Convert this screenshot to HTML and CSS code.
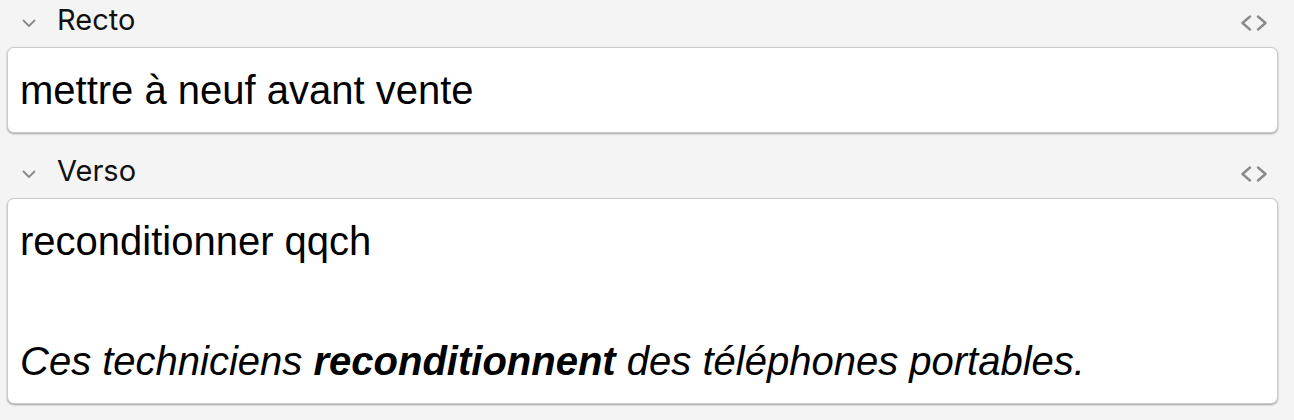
FILE: index.html
```html
<!DOCTYPE html>
<html lang="fr">
<head>
  <meta charset="UTF-8">
  <meta name="viewport" content="width=device-width, initial-scale=1.0">
  <title>Éditeur</title>
  <link rel="stylesheet" href="styles.css">
</head>
<body>
<div class="editor">

  <div class="field">
    <div class="field-head">
      <svg class="collapse" width="14" height="14" viewBox="0 0 14 14">
        <path d="M1.5 4.5 L7 10 L12.5 4.5" fill="none" stroke="#8a8a8a" stroke-width="1.8" stroke-linecap="round" stroke-linejoin="round"/>
      </svg>
      <span class="field-name">Recto</span>
      <svg class="html-toggle" width="28" height="16" viewBox="0 0 28 16">
        <path d="M10 1.5 L2.5 8 L10 14.5 M18 1.5 L25.5 8 L18 14.5" fill="none" stroke="#8a8a8a" stroke-width="2.4" stroke-linecap="round" stroke-linejoin="round"/>
      </svg>
    </div>
    <div class="field-box">
      <div>mettre à neuf avant vente</div>
    </div>
  </div>

  <div class="field">
    <div class="field-head">
      <svg class="collapse" width="14" height="14" viewBox="0 0 14 14">
        <path d="M1.5 4.5 L7 10 L12.5 4.5" fill="none" stroke="#8a8a8a" stroke-width="1.8" stroke-linecap="round" stroke-linejoin="round"/>
      </svg>
      <span class="field-name">Verso</span>
      <svg class="html-toggle" width="28" height="16" viewBox="0 0 28 16">
        <path d="M10 1.5 L2.5 8 L10 14.5 M18 1.5 L25.5 8 L18 14.5" fill="none" stroke="#8a8a8a" stroke-width="2.4" stroke-linecap="round" stroke-linejoin="round"/>
      </svg>
    </div>
    <div class="field-box">
      <div>reconditionner qqch</div>
      <div><br></div>
      <div><i>Ces techniciens <b>reconditionnent</b> des téléphones portables.</i></div>
    </div>
  </div>

</div>
</body>
</html>
```

FILE: styles.css
```css
body {
  margin: 0;
  background: #f4f4f4;
  font-family: Inter, "Noto Sans", sans-serif;
}
.editor {
  padding: 0 16px 0 7px;
}
.field {
  margin-bottom: 18px;
}
.field-head {
  display: flex;
  align-items: center;
  height: 40px;
  margin-bottom: 7px;
  padding-left: 15px;
}
.collapse {
  margin-top: 6px;
}
.field-name {
  margin-left: 21px;
  font-size: 29px;
  line-height: 40px;
  color: #111;
}
.html-toggle {
  margin-left: auto;
  margin-right: 10px;
  margin-top: 5px;
}
.field-box {
  background: #fff;
  border: 1px solid #cbcbcb;
  border-radius: 7px;
  box-shadow: 0 1px 2px rgba(0, 0, 0, 0.35);
  padding: 12px 10px 12px 12px;
  font-family: "Liberation Sans", Arial, sans-serif;
  font-size: 40px;
  line-height: 60px;
  color: #000;
}
```
